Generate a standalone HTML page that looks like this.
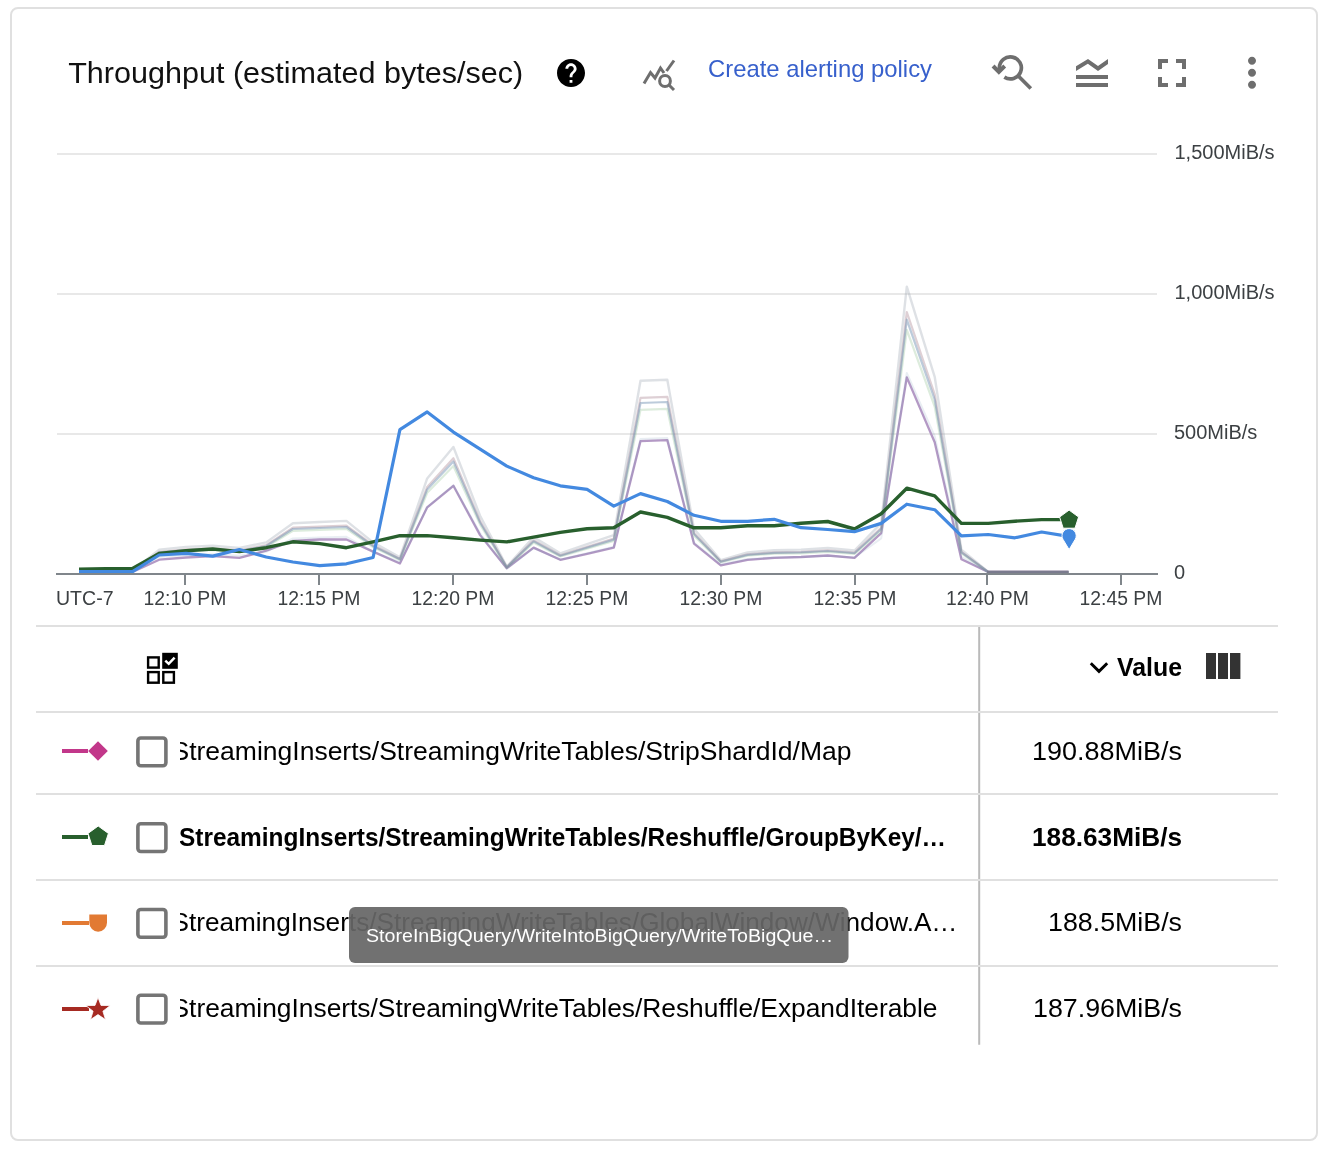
<!DOCTYPE html>
<html><head><meta charset="utf-8">
<style>
html,body{margin:0;padding:0;background:#fff;width:1340px;height:1162px;overflow:hidden}
svg{display:block;will-change:transform}
text{font-family:"Liberation Sans",sans-serif}
</style></head>
<body>
<svg width="1340" height="1162" viewBox="0 0 1340 1162">
<defs>
<clipPath id="rowclip"><rect x="180" y="700" width="790" height="360"/></clipPath>
</defs>
<!-- card -->
<rect x="11" y="8" width="1306" height="1132" rx="7" ry="7" fill="#fff" stroke="#e0e0e0" stroke-width="2"/>

<!-- header -->
<text x="68.2" y="82.8" font-size="29.6" fill="#111" textLength="455" lengthAdjust="spacingAndGlyphs">Throughput (estimated bytes/sec)</text>
<!-- help icon -->
<g transform="translate(554.2,56.2) scale(1.4)"><path fill="#000" d="M12 2C6.48 2 2 6.48 2 12s4.48 10 10 10 10-4.48 10-10S17.52 2 12 2zm1 17h-2v-2h2v2zm2.07-7.75l-.9.92C13.45 12.9 13 13.5 13 15h-2v-.5c0-1.1.45-2.1 1.17-2.83l1.24-1.26c.37-.36.59-.86.59-1.41 0-1.1-.9-2-2-2s-2 .9-2 2H8c0-2.210 1.79-4 4-4s4 1.79 4 4c0 .88-.36 1.68-.93 2.25z"/></g>
<!-- query stats icon -->
<g fill="none" stroke="#6e6e6e" stroke-width="3">
<polyline points="644,83.5 650.5,72.5 655,78 660.5,68 664,73" stroke-linejoin="miter"/>
<line x1="666.5" y1="71" x2="674" y2="60.5"/>
<circle cx="665" cy="81" r="5.4"/>
<line x1="668.5" y1="84.5" x2="674" y2="90"/>
</g>
<text x="708" y="76.6" font-size="24" fill="#3760cc" textLength="224" lengthAdjust="spacingAndGlyphs">Create alerting policy</text>
<!-- zoom reset icon -->
<g fill="none" stroke="#6e6e6e" stroke-width="3.7">
<path d="M1004.36,77.13 A11,11 0 1 0 999.35,67.9 L999.35,69"/>
<line x1="1018.6" y1="76.2" x2="1030.8" y2="88.5"/>
</g>
<polygon points="991.6,67.4 994.5,64.6 998.85,69 1003.3,64.6 1006.1,67.4 998.85,74.7" fill="#6e6e6e"/>
<!-- legend toggle -->
<g transform="translate(1068,49) scale(2)"><path fill="#6e6e6e" d="M20,15H4v-2h16V15z M20,17H4v2h16V17z M15,11l5-3.55L20,5l-5,3.55L10,5L4,8.66L4,11l5.92-3.61L15,11z"/></g>
<!-- fullscreen -->
<g transform="translate(1148,49) scale(2)"><path fill="#6e6e6e" d="M7 14H5v5h5v-2H7v-3zm-2-4h2V7h3V5H5v5zm12 7h-3v2h5v-5h-2v3zM14 5v2h3v3h2V5h-5z"/></g>
<!-- more vert -->
<g transform="translate(1228,48.7) scale(2)"><path fill="#6e6e6e" d="M12 8c1.1 0 2-.9 2-2s-.9-2-2-2-2 .9-2 2 .9 2 2 2zm0 2c-1.1 0-2 .9-2 2s.9 2 2 2 2-.9 2-2-.9-2-2-2zm0 6c-1.1 0-2 .9-2 2s.9 2 2 2 2-.9 2-2-.9-2-2-2z"/></g>

<!-- grid -->
<g stroke="#e8e8e8" stroke-width="2">
<line x1="57" y1="154" x2="1157" y2="154"/>
<line x1="57" y1="294" x2="1157" y2="294"/>
<line x1="57" y1="434" x2="1157" y2="434"/>
</g>
<g font-size="20" fill="#3c4043">
<text x="1174.5" y="159">1,500MiB/s</text>
<text x="1174.5" y="299">1,000MiB/s</text>
<text x="1174" y="439.2">500MiB/s</text>
<text x="1174" y="579">0</text>
</g>
<!-- series -->
<g fill="none" stroke-linejoin="round" stroke-linecap="butt">
<polyline points="79.0,572.0 105.7,572.0 132.5,572.0 159.2,559.7 186.0,557.5 212.7,556.1 239.4,557.9 266.2,550.7 292.9,540.9 319.7,539.5 346.4,539.5 373.1,551.6 399.9,563.5 427.2,507.3 453.4,485.8 480.1,535.1 506.8,568.2 533.6,547.6 560.3,559.8 587.1,553.9 613.8,547.6 640.5,441.1 667.3,440.1 694.0,543.6 720.8,565.4 747.5,559.8 774.2,557.9 801.0,557.0 827.7,555.5 854.5,557.9 881.2,533.1 906.8,377.4 934.7,442.2 961.4,559.3 988.2,572.0 1014.9,572.0 1041.6,572.0 1068.4,572.0" stroke="#b094c2" stroke-opacity="0.95" stroke-width="2.3"/>
<polyline points="79.0,570.6 105.7,570.6 132.5,570.6 159.2,549.6 186.0,546.9 212.7,545.8 239.4,548.0 266.2,542.4 292.9,523.2 319.7,522.0 346.4,520.9 373.1,542.4 399.9,557.4 427.2,478.4 453.4,447.0 480.1,515.8 506.8,566.5 533.6,537.1 560.3,553.3 587.1,544.2 613.8,535.2 640.5,380.8 667.3,379.7 694.0,528.9 720.8,560.2 747.5,552.4 774.2,550.2 801.0,549.6 827.7,548.0 854.5,550.5 881.2,523.2 906.8,286.6 934.7,376.8 961.4,549.6 988.2,571.8 1014.9,571.8 1041.6,571.8 1068.4,571.8" stroke="#9aa5b1" stroke-opacity="0.33" stroke-width="2.4"/>
<polyline points="79.0,571.6 105.7,571.6 132.5,571.6 159.2,556.9 186.0,555.0 212.7,554.2 239.4,555.8 266.2,551.8 292.9,538.4 319.7,537.6 346.4,536.8 373.1,551.8 399.9,562.3 427.2,507.1 453.4,485.2 480.1,533.3 506.8,568.7 533.6,548.1 560.3,559.5 587.1,553.1 613.8,546.8 640.5,438.9 667.3,438.1 694.0,542.4 720.8,564.3 747.5,558.9 774.2,557.3 801.0,556.9 827.7,555.8 854.5,557.5 881.2,538.4 906.8,373.0 934.7,436.1 961.4,556.9 988.2,572.4 1014.9,572.4 1041.6,572.4 1068.4,572.4" stroke="#6a8cb0" stroke-opacity="0.15" stroke-width="2"/>
<polyline points="79.0,571.1 105.7,571.1 132.5,571.1 159.2,553.3 186.0,551.0 212.7,550.0 239.4,551.9 266.2,547.1 292.9,530.8 319.7,529.8 346.4,528.9 373.1,547.1 399.9,559.9 427.2,492.8 453.4,466.1 480.1,524.6 506.8,567.6 533.6,542.6 560.3,556.4 587.1,548.6 613.8,541.0 640.5,409.8 667.3,408.9 694.0,535.7 720.8,562.3 747.5,555.7 774.2,553.7 801.0,553.3 827.7,551.9 854.5,554.0 881.2,530.8 906.8,329.8 934.7,406.5 961.4,553.3 988.2,572.1 1014.9,572.1 1041.6,572.1 1068.4,572.1" stroke="#90c090" stroke-opacity="0.3" stroke-width="2.2"/>
<polyline points="79.0,570.9 105.7,570.9 132.5,570.9 159.2,551.8 186.0,549.3 212.7,548.3 239.4,550.3 266.2,545.2 292.9,527.7 319.7,526.6 346.4,525.6 373.1,545.2 399.9,558.9 427.2,486.9 453.4,458.2 480.1,521.0 506.8,567.1 533.6,540.3 560.3,555.2 587.1,546.8 613.8,538.6 640.5,397.9 667.3,396.8 694.0,532.9 720.8,561.4 747.5,554.3 774.2,552.3 801.0,551.8 827.7,550.3 854.5,552.6 881.2,527.7 906.8,312.0 934.7,394.3 961.4,551.8 988.2,571.9 1014.9,571.9 1041.6,571.9 1068.4,571.9" stroke="#a07888" stroke-opacity="0.35" stroke-width="2.2"/>
<polyline points="79.0,571.0 105.7,571.0 132.5,571.0 159.2,552.4 186.0,550.0 212.7,549.0 239.4,551.0 266.2,546.0 292.9,529.0 319.7,528.0 346.4,527.0 373.1,546.0 399.9,559.3 427.2,489.4 453.4,461.6 480.1,522.5 506.8,567.3 533.6,541.3 560.3,555.7 587.1,547.6 613.8,539.6 640.5,403.0 667.3,402.0 694.0,534.1 720.8,561.8 747.5,554.9 774.2,552.9 801.0,552.4 827.7,551.0 854.5,553.2 881.2,529.0 906.8,319.6 934.7,399.5 961.4,552.4 988.2,572.0 1014.9,572.0 1041.6,572.0 1068.4,572.0" stroke="#6a8cb0" stroke-opacity="0.45" stroke-width="2.2"/>
<polyline points="79.0,569.3 105.7,568.6 132.5,568.6 159.2,553.4 186.0,550.8 212.7,549.0 239.4,551.6 266.2,547.7 292.9,541.8 319.7,543.6 346.4,547.7 373.1,541.8 399.9,535.7 427.2,535.6 453.4,537.8 480.1,540.1 506.8,541.9 533.6,537.2 560.3,532.4 587.1,528.8 613.8,527.7 640.5,512.0 667.3,517.3 694.0,527.8 720.8,527.8 747.5,525.8 774.2,525.8 801.0,523.3 827.7,521.5 854.5,529.0 881.2,513.8 906.8,488.2 934.7,495.9 961.4,523.4 988.2,523.4 1014.9,521.2 1041.6,519.6 1068.4,519.6" stroke="#285f2d" stroke-width="3.4"/>
<polyline points="79.0,571.7 105.7,571.7 132.5,571.7 159.2,555.0 186.0,553.4 212.7,556.1 239.4,549.5 266.2,557.0 292.9,562.0 319.7,565.6 346.4,563.8 373.1,557.5 399.9,429.7 427.2,411.9 453.4,432.1 480.1,449.1 506.8,466.1 533.6,477.8 560.3,485.8 587.1,489.4 613.8,506.1 640.5,493.6 667.3,501.5 694.0,515.3 720.8,521.3 747.5,521.3 774.2,519.3 801.0,527.7 827.7,529.5 854.5,531.7 881.2,523.4 906.8,504.2 934.7,509.7 961.4,535.8 988.2,534.5 1014.9,537.8 1041.6,532.0 1068.4,536.4" stroke="#4389e0" stroke-width="3.2"/>
</g>
<line x1="987" y1="572.4" x2="1068.6" y2="572.4" stroke="#7b7b8e" stroke-width="3.2"/>
<!-- axis -->
<line x1="56" y1="574" x2="1158" y2="574" stroke="#80868b" stroke-width="2"/>
<line x1="185" y1="574" x2="185" y2="585" stroke="#80868b" stroke-width="2"/><line x1="319" y1="574" x2="319" y2="585" stroke="#80868b" stroke-width="2"/><line x1="453" y1="574" x2="453" y2="585" stroke="#80868b" stroke-width="2"/><line x1="587" y1="574" x2="587" y2="585" stroke="#80868b" stroke-width="2"/><line x1="721" y1="574" x2="721" y2="585" stroke="#80868b" stroke-width="2"/><line x1="855" y1="574" x2="855" y2="585" stroke="#80868b" stroke-width="2"/><line x1="987" y1="574" x2="987" y2="585" stroke="#80868b" stroke-width="2"/><line x1="1121" y1="574" x2="1121" y2="585" stroke="#80868b" stroke-width="2"/>
<g font-size="20" fill="#3c4043">
<text x="56" y="604.8" textLength="57.5" lengthAdjust="spacingAndGlyphs">UTC-7</text>
<text x="185" y="605" text-anchor="middle" textLength="82.8" lengthAdjust="spacingAndGlyphs">12:10 PM</text><text x="319" y="605" text-anchor="middle" textLength="82.8" lengthAdjust="spacingAndGlyphs">12:15 PM</text><text x="453" y="605" text-anchor="middle" textLength="82.8" lengthAdjust="spacingAndGlyphs">12:20 PM</text><text x="587" y="605" text-anchor="middle" textLength="82.8" lengthAdjust="spacingAndGlyphs">12:25 PM</text><text x="721" y="605" text-anchor="middle" textLength="82.8" lengthAdjust="spacingAndGlyphs">12:30 PM</text><text x="855" y="605" text-anchor="middle" textLength="82.8" lengthAdjust="spacingAndGlyphs">12:35 PM</text><text x="987.5" y="605" text-anchor="middle" textLength="82.8" lengthAdjust="spacingAndGlyphs">12:40 PM</text><text x="1121" y="605" text-anchor="middle" textLength="82.8" lengthAdjust="spacingAndGlyphs">12:45 PM</text>
</g>
<!-- end markers -->
<polygon points="1069.1,510.1 1078.6,517 1075,528.2 1063.2,528.2 1059.6,517" fill="#285f2d" stroke="#fff" stroke-width="1"/>
<path d="M1069.1,549.6 L1062.9,539.2 A7.1,7.1 0 1 1 1075.3,539.2 Z" fill="#4389e0" stroke="#fff" stroke-width="1"/>

<!-- table -->
<line x1="979.2" y1="627" x2="979.2" y2="1044.8" stroke="#bababa" stroke-width="2"/>
<g stroke="#e0e0e0" stroke-width="2">
<line x1="36" y1="626" x2="1278" y2="626"/>
<line x1="36" y1="712" x2="1278" y2="712"/>
<line x1="36" y1="794" x2="1278" y2="794"/>
<line x1="36" y1="880" x2="1278" y2="880"/>
<line x1="36" y1="966" x2="1278" y2="966"/>
</g>
<!-- header grid icon -->
<g fill="none" stroke="#000" stroke-width="2.4">
<rect x="148.1" y="657.4" width="10.6" height="10.2"/>
<rect x="148.1" y="672.1" width="10.6" height="10.6"/>
<rect x="163.3" y="672.1" width="10.6" height="10.6"/>
</g>
<rect x="162.2" y="652.8" width="15.6" height="16" fill="#000"/>
<polyline points="165.3,660.6 168.7,663.8 174.6,657.6" fill="none" stroke="#fff" stroke-width="2.5"/>
<!-- Value header -->
<polyline points="1090.8,663.2 1099,671.4 1107.2,663.2" fill="none" stroke="#000" stroke-width="2.9"/>
<text x="1117" y="676.3" font-size="25.5" font-weight="bold" fill="#000" textLength="65" lengthAdjust="spacingAndGlyphs">Value</text>
<g fill="#333">
<rect x="1206" y="653" width="10" height="26"/>
<rect x="1218" y="653" width="10" height="26"/>
<rect x="1230" y="653" width="10.4" height="26"/>
</g>

<!-- row markers -->
<g>
<line x1="62" y1="751" x2="88" y2="751" stroke="#c2378a" stroke-width="4"/>
<polygon points="98,741.2 107.8,751 98,760.8 88.2,751" fill="#c2378a"/>
<line x1="62" y1="837" x2="88" y2="837" stroke="#285f2d" stroke-width="4"/>
<polygon points="98.2,826 108.4,833.4 104.5,845.5 91.9,845.5 88,833.4" fill="#285f2d" stroke="#fff" stroke-width="1"/>
<line x1="62" y1="923" x2="89" y2="923" stroke="#e27a33" stroke-width="4"/>
<path d="M89.3,914.6 H107 V922.8 A8.85,8.85 0 0 1 89.3,922.8 Z" fill="#e27a33"/>
<line x1="62" y1="1009" x2="89" y2="1009" stroke="#a62a22" stroke-width="4"/>
<polygon points="98,997.4 101,1005.4 110.2,1005.6 102.9,1011.2 105.5,1019.6 98,1014.6 90.5,1019.6 93.1,1011.2 85.8,1005.6 95,1005.4" fill="#a62a22" stroke="#fff" stroke-width="0.8"/>
</g>
<!-- checkboxes -->
<g fill="none" stroke="#757575" stroke-width="3.6">
<rect x="137.9" y="738" width="28" height="27.8" rx="3"/>
<rect x="137.9" y="823.7" width="28" height="27.8" rx="3"/>
<rect x="137.9" y="909.5" width="28" height="27.8" rx="3"/>
<rect x="137.9" y="995.2" width="28" height="27.8" rx="3"/>
</g>
<!-- row names -->
<g clip-path="url(#rowclip)" font-size="26.5" fill="#000">
<text x="171.5" y="760.3" textLength="680" lengthAdjust="spacingAndGlyphs">StreamingInserts/StreamingWriteTables/StripShardId/Map</text>
<text x="179" y="845.8" font-weight="bold" textLength="767" lengthAdjust="spacingAndGlyphs">StreamingInserts/StreamingWriteTables/Reshuffle/GroupByKey/…</text>
<text x="171.5" y="931.4" textLength="786" lengthAdjust="spacingAndGlyphs">StreamingInserts/StreamingWriteTables/GlobalWindow/Window.A…</text>
<text x="171.5" y="1017.2" textLength="766" lengthAdjust="spacingAndGlyphs">StreamingInserts/StreamingWriteTables/Reshuffle/ExpandIterable</text>
</g>
<!-- values -->
<g font-size="25" fill="#000" text-anchor="end">
<text x="1182" y="759.8" textLength="150" lengthAdjust="spacingAndGlyphs">190.88MiB/s</text>
<text x="1182" y="845.6" font-weight="bold" textLength="150" lengthAdjust="spacingAndGlyphs">188.63MiB/s</text>
<text x="1182" y="931.2" textLength="134" lengthAdjust="spacingAndGlyphs">188.5MiB/s</text>
<text x="1182" y="1016.9" textLength="149" lengthAdjust="spacingAndGlyphs">187.96MiB/s</text>
</g>

<!-- tooltip -->
<rect x="349" y="907" width="499.5" height="56" rx="6" fill="#666" fill-opacity="0.93"/>
<text x="366" y="941.6" font-size="19.2" fill="#fff" textLength="467" lengthAdjust="spacingAndGlyphs">StoreInBigQuery/WriteIntoBigQuery/WriteToBigQue…</text>
</svg>
</body></html>
